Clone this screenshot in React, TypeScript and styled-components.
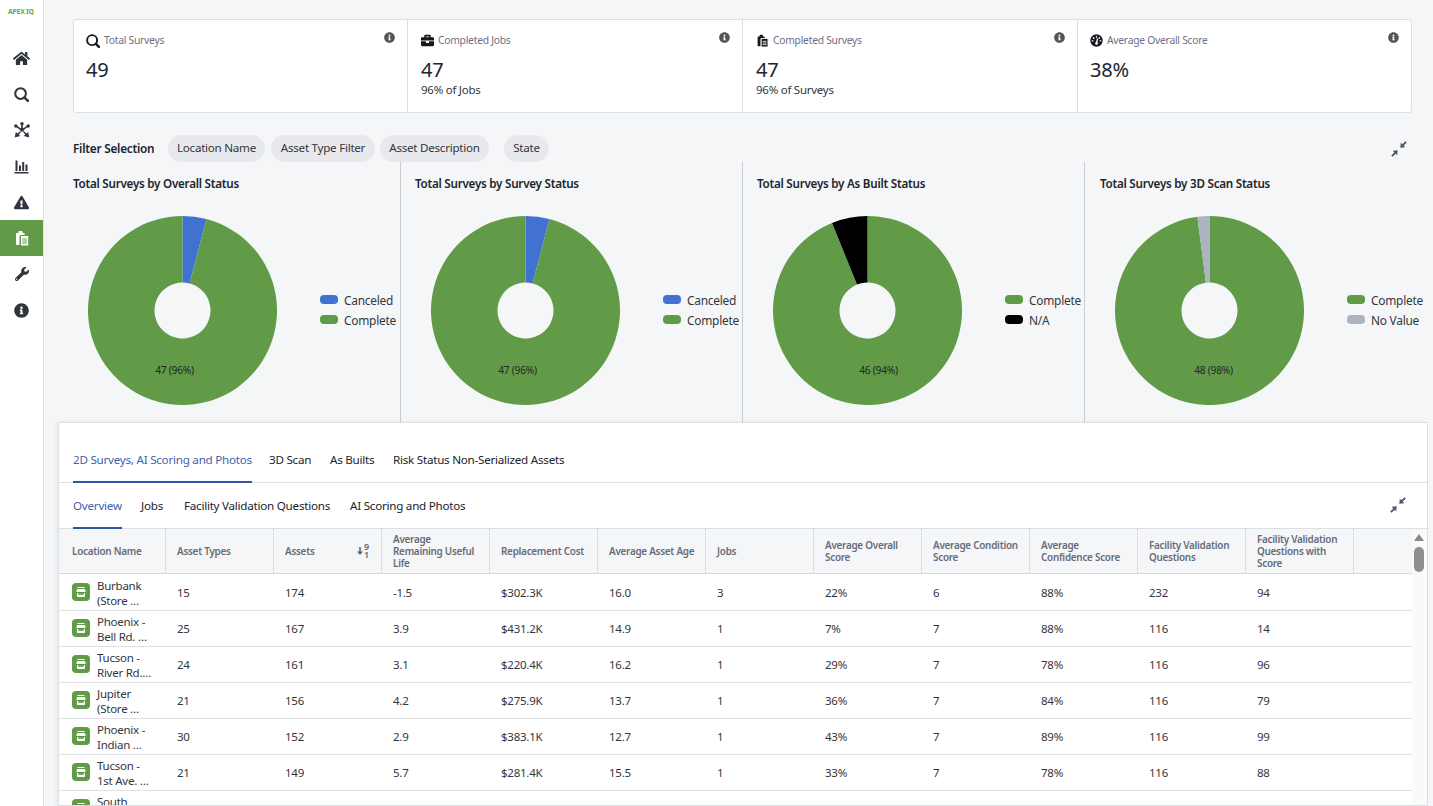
import React from "react";
import styled, { createGlobalStyle } from "styled-components";
import { FaHome, FaExclamationTriangle, FaWrench, FaInfoCircle, FaBriefcase } from "react-icons/fa";

const FONT = `"Noto Sans", "Liberation Sans", sans-serif`;
const GREEN = "#619b48";
const BLUE = "#4272d1";

const Global = createGlobalStyle`
  html, body { margin: 0; padding: 0; height: 100%; overflow: hidden; background: #f5f6f8; }
  body { font-family: ${FONT}; color: #20242c; letter-spacing: -0.25px; }
  #root { height: 806px; }
  * { box-sizing: border-box; }
`;

const Shell = styled.div`display: flex; height: 806px; overflow: hidden;`;
const Sidebar = styled.nav`
  width: 44px; flex: none; background: #fff; border-right: 1px solid #dfe1e5;
  display: flex; flex-direction: column;
`;
const Logo = styled.div`
  height: 40px; padding: 7px 0 0 8px; font-size: 7px; line-height: 10px; font-weight: 700;
  color: #6aa850; letter-spacing: -0.3px; white-space: nowrap;
`;
const NavItem = styled.div<{ $active?: boolean }>`
  height: 36px; display: flex; align-items: center; justify-content: center;
  color: ${(p) => (p.$active ? "#fff" : "#30343c")};
  background: ${(p) => (p.$active ? GREEN : "transparent")};
`;
const Main = styled.main`flex: 1; min-width: 0; padding: 19px 5px 0 14px; display: flex; flex-direction: column;`;

const Cards = styled.section`
  margin: 0 16px 0 15px; height: 94px; flex: none; display: grid; grid-template-columns: 334px 335px 335px 1fr;
  background: #fff; border: 1px solid #dcdfe3; border-radius: 3px;
`;
const Card = styled.div`
  position: relative; padding: 13px 12px 0 13px; border-right: 1px solid #dcdfe3;
  &:first-child { padding-left: 12px; }
  &:last-child { border-right: 0; padding-left: 12px; }
`;
const CardHead = styled.div`display: flex; align-items: center; gap: 4px; height: 15px; color: #16181d;`;
const CardLabel = styled.span`font-size: 10.3px; line-height: 15px; color: #6d7088;`;
const InfoBadge = styled.span`position: absolute; top: 12px; right: 12px; color: #555; display: flex;`;
const CardValue = styled.div`font-size: 20px; line-height: 26px; margin-top: 9px; color: #20242c;`;
const CardSub = styled.div`font-size: 11.5px; line-height: 16px; margin-top: -1px; color: #33363d;`;

const FilterBar = styled.div`
  margin: 22px 21px 0 15px; height: 27px; flex: none; display: flex; align-items: center;
`;
const FilterTitle = styled.span`font-size: 11.8px; line-height: 24px; height: 26px; font-weight: 600; width: 95px; color: #20242c;`;
const Chip = styled.span<{ $w: number; $after: number }>`
  width: ${(p) => p.$w}px; margin-right: ${(p) => p.$after}px; height: 27px; padding-bottom: 2px; border-radius: 14px;
  background: #e8e9ec; font-size: 11.6px; display: flex; align-items: center; justify-content: center;
  color: #33363d; white-space: nowrap;
`;
const Spacer = styled.span`flex: 1;`;

const Charts = styled.section`display: grid; grid-template-columns: 343px 342px 342px 1fr; height: 260px; flex: none;`;
const ChartCol = styled.div`
  border-right: 1px solid #c9ccd1; padding: 14px 0 0 14px;
  &:first-child { padding-left: 15px; }
  &:last-child { border-right: 0; padding-left: 15px; }
`;
const ChartTitle = styled.h3`margin: 0; font-size: 11.65px; line-height: 16px; font-weight: 600; color: #20242c; white-space: nowrap;`;
const ChartBody = styled.div`
  display: flex; align-items: center; margin: 24px 0 0 16px;
  ${ChartCol}:first-child &, ${ChartCol}:last-child & { margin-left: 15px; }
`;
const Legend = styled.ul`list-style: none; margin: 0 0 3px 42px; padding: 0; display: flex; flex-direction: column; gap: 4px;`;
const LegendItem = styled.li`display: flex; align-items: center; gap: 6px; font-size: 11.9px; line-height: 16px; color: #33363d; white-space: nowrap;`;
const Swatch = styled.i<{ $c: string }>`display: block; width: 18px; height: 9px; border-radius: 4px; background: ${(p) => p.$c};`;

const Panel = styled.section`
  flex: 1; min-height: 0; background: #fff; border: 1px solid #dcdfe3; overflow: hidden;
  box-shadow: -2px 0 5px rgba(0,0,0,.06);
`;
const TabRow = styled.div<{ $h: number; $gap: number }>`
  height: ${(p) => p.$h}px; border-bottom: 1px solid #dcdfe3; padding-left: 14px;
  display: flex; gap: ${(p) => p.$gap}px; position: relative;
`;
const Tab = styled.div<{ $active?: boolean; $w: number; $pt: number }>`
  width: ${(p) => p.$w}px; padding-top: ${(p) => p.$pt}px; font-size: 11.65px; line-height: 18px; white-space: nowrap;
  color: ${(p) => (p.$active ? "#3e62b0" : "#20242c")};
  border-bottom: 2px solid ${(p) => (p.$active ? "#2f55a4" : "transparent")};
  margin-bottom: -1px;
`;
const Corner = styled.span`position: absolute; right: 21px; top: 14px; display: flex;`;

const TableWrap = styled.div`display: flex; align-items: stretch; height: 280px;`;
const Table = styled.div`flex: 1; min-width: 0;`;
const GRID = "107px repeat(11, 108px) 1fr";
const HeaderRow = styled.div`
  display: grid; grid-template-columns: ${GRID}; height: 45px; background: #f5f6f8;
  border-bottom: 1px solid #d5d8dc;
`;
const HeadCell = styled.div<{ $first?: boolean }>`
  padding: 0 8px 0 ${(p) => (p.$first ? 13 : 11)}px; border-right: 1px dotted #c5c8cd;
  display: flex; align-items: center; justify-content: space-between;
  font-size: 9.9px; line-height: 12px; font-weight: 600; color: #666c79;
  &:last-child { border-right: 0; }
`;
const RowList = styled.div`padding-top: 1px;`;
const Row = styled.div`
  display: grid; grid-template-columns: ${GRID}; height: 36px; border-bottom: 1px solid #dfe1e5;
`;
const Cell = styled.div`
  padding: 0 0 0 11px; display: flex; align-items: center; font-size: 11.5px; color: #33363d; white-space: nowrap;
`;
const NameCell = styled.div`
  padding-left: 13px; display: flex; align-items: flex-start; gap: 7px; height: 35px; overflow: visible;
`;
const StoreBadge = styled.span`
  flex: none; width: 18px; height: 18px; margin-top: 8px; border-radius: 4px; background: ${GREEN};
  display: flex; align-items: center; justify-content: center;
`;
const NameText = styled.div`font-size: 11.5px; line-height: 15px; padding-top: 3px; color: #33363d; white-space: nowrap;`;
const Scrollbar = styled.div`width: 15px; flex: none; background: #fafafa; position: relative;`;
const ScrollArrow = styled.span`
  position: absolute; top: 5px; left: 2px; width: 0; height: 0;
  border-left: 5px solid transparent; border-right: 5px solid transparent; border-bottom: 7px solid #8a8a8a;
`;
const ScrollThumb = styled.span`position: absolute; top: 18px; left: 2px; width: 10px; height: 25px; border-radius: 5px; background: #8f8f8f;`;
const SortIcon = styled.span`display: flex; align-items: center; gap: 1px; color: #5f6673; margin-right: 4px;`;
const SortDigits = styled.span`display: flex; flex-direction: column; font-size: 9px; line-height: 8px; font-weight: 600;`;

const Compress = () => (
  <svg width="16" height="16" viewBox="0 0 16 16" fill="#4d566b">
    <path d="M15.800 1.500 14.500.2 11.400 3.300 9.800 1.700 9.300 6.700l5-.5-1.600-1.600zM.2 14.500l1.300 1.300 3.100-3.100 1.600 1.600.5-5-5 .5 1.600 1.600z" />
  </svg>
);
const Lens = ({ s }: { s: number }) => (
  <svg width={s} height={s} viewBox="0 0 16 16" fill="none" stroke="currentColor">
    <circle cx="7" cy="7" r="5.700" strokeWidth="2.200" />
    <path d="M11.300 11.300 14.800 14.800" strokeWidth="2.800" strokeLinecap="round" />
  </svg>
);
const Clipboard = ({ c = "currentColor", s = 16, line = "#fff" }: { c?: string; s?: number; line?: string }) => (
  <svg width={s} height={s} viewBox="0 0 16 16">
    <path fill={c} d="M4.500 3V1.700A.8.8 0 0 1 5.300 1h2.400a.8.8 0 0 1 .8.700V3h1.200a1 1 0 0 1 1 1v1H7A1.500 1.500 0 0 0 5.500 6.500V15H3a1 1 0 0 1-1-1V4a1 1 0 0 1 1-1z" />
    <path fill={c} d="M7 6h7.200v9.500H7z" />
    <path stroke={line} strokeWidth="1" d="M8.300 9h4.600M8.300 11h4.600M8.300 13h4.600" />
  </svg>
);
const Hub = () => (
  <svg width="16" height="16" viewBox="0 0 16 16" fill="currentColor">
    <circle cx="8" cy="7.600" r="2.100" />
    <circle cx="8" cy="1.800" r="1.700" />
    <circle cx="1.800" cy="4" r="1.700" />
    <circle cx="14.200" cy="4" r="1.700" />
    <path d="M7.200 2h1.600v4H7.200zM2.200 3.100l4.600 3.400-.9 1.200L1.300 4.300zM13.800 3.100 9.200 6.500l.9 1.200 4.600-3.400z" />
    <path d="M6.300 9.100 7 10l-2.300 2.500 1.500 1.500L.7 15.400l1.100-5.500L3.400 11.500zM9.700 9.100 9 10l2.300 2.500-1.500 1.500 5.500 1.400-1.100-5.500-1.600 1.600z" />
  </svg>
);
const Bars = () => (
  <svg width="15" height="15" viewBox="0 0 15 15" fill="currentColor">
    <path d="M.5 13h14v1.600H.5zM1.500 1.500h2v10.500h-2zM5 6.500h2v5.500H5zM8.200 3h2v9h-2zM11.500 5.500h2V12h-2z" />
  </svg>
);
const Gauge = () => (
  <svg width="13" height="13" viewBox="0 0 13 13">
    <circle cx="6.500" cy="6.500" r="6.200" fill="#16181d" />
    <path stroke="#fff" strokeWidth="1.300" strokeLinecap="round" d="M6.500 2.400v.6M3.400 3.700l.5.5M9.600 3.700l-.5.5M2.200 6.800h.7M10.800 6.800h-.7M6.500 9.500 7.400 5" />
    <circle cx="6.500" cy="9.400" r="1.300" fill="#fff" />
  </svg>
);
const Store = () => (
  <svg width="12" height="12" viewBox="0 0 12 12" fill="#fff">
    <path d="M2.500 1h7v1.100h-7zM2.200 3h7.600l1 2.200c0 .5-.4.8-.9.8H2.100c-.5 0-.9-.3-.9-.8z" />
    <path d="M2 7h1.200v1.800h5.600V7H10v3.200c0 .5-.3.8-.8.8H2.800c-.5 0-.8-.3-.8-.8z" />
  </svg>
);

type Slice = { value: number; color: string };
const polar = (a: number, r: number) => {
  const t = (a * Math.PI) / 180;
  return [94.5 + r * Math.sin(t), 94.5 - r * Math.cos(t)];
};
const arcPath = (start: number, end: number) => {
  const R = 94.5, I = 28;
  const [x1, y1] = polar(start, R), [x2, y2] = polar(end, R), [x3, y3] = polar(end, I), [x4, y4] = polar(start, I);
  const large = end - start > 180 ? 1 : 0;
  return `M${x1} ${y1}A${R} ${R} 0 ${large} 1 ${x2} ${y2}L${x3} ${y3}A${I} ${I} 0 ${large} 0 ${x4} ${y4}Z`;
};
const ChartSvg = styled.svg`flex: none; display: block;`;

const Donut = ({ first, second, label, lx }: { first: Slice; second: Slice; label: string; lx: number }) => {
  const total = first.value + second.value;
  const a = (first.value / total) * 360;
  return (
    <ChartSvg width="190" height="190" viewBox="0 0 190 190">
      <path d={arcPath(0, a)} fill={first.color} />
      <path d={arcPath(a, 360)} fill={second.color} />
      <text x={lx} y="158" textAnchor="middle" fontSize="10.200" fill="#20242c" fontFamily={FONT}>{label}</text>
    </ChartSvg>
  );
};

const charts = [
  { title: "Total Surveys by Overall Status", first: { value: 2, color: BLUE }, second: { value: 47, color: GREEN }, label: "47 (96%)", lx: 86.5, legend: [["Canceled", BLUE], ["Complete", GREEN]] },
  { title: "Total Surveys by Survey Status", first: { value: 2, color: BLUE }, second: { value: 47, color: GREEN }, label: "47 (96%)", lx: 86.5, legend: [["Canceled", BLUE], ["Complete", GREEN]] },
  { title: "Total Surveys by As Built Status", first: { value: 46, color: GREEN }, second: { value: 3, color: "#000" }, label: "46 (94%)", lx: 105.5, legend: [["Complete", GREEN], ["N/A", "#000"]] },
  { title: "Total Surveys by 3D Scan Status", first: { value: 48, color: GREEN }, second: { value: 1, color: "#aeb3c0" }, label: "48 (98%)", lx: 98.5, legend: [["Complete", GREEN], ["No Value", "#aeb3c0"]] },
];

const headers = ["Location Name", "Asset Types", "Assets", "Average Remaining Useful Life", "Replacement Cost", "Average Asset Age", "Jobs", "Average Overall Score", "Average Condition Score", "Average Confidence Score", "Facility Validation Questions", "Facility Validation Questions with Score", ""];
const rows: [string, string, string[]][] = [
  ["Burbank", "(Store …", ["15", "174", "-1.5", "$302.3K", "16.0", "3", "22%", "6", "88%", "232", "94"]],
  ["Phoenix -", "Bell Rd. …", ["25", "167", "3.9", "$431.2K", "14.9", "1", "7%", "7", "88%", "116", "14"]],
  ["Tucson -", "River Rd.…", ["24", "161", "3.1", "$220.4K", "16.2", "1", "29%", "7", "78%", "116", "96"]],
  ["Jupiter", "(Store …", ["21", "156", "4.2", "$275.9K", "13.7", "1", "36%", "7", "84%", "116", "79"]],
  ["Phoenix -", "Indian …", ["30", "152", "2.9", "$383.1K", "12.7", "1", "43%", "7", "89%", "116", "99"]],
  ["Tucson -", "1st Ave. …", ["21", "149", "5.7", "$281.4K", "15.5", "1", "33%", "7", "78%", "116", "88"]],
  ["South", "Gate …", ["25", "148", "4.1", "$302.0K", "18.8", "1", "18%", "7", "85%", "116", "88"]],
];
const cards = [
  { icon: <Lens s={14} />, label: "Total Surveys", value: "49" },
  { icon: <FaBriefcase size={13} />, label: "Completed Jobs", value: "47", sub: "96% of Jobs" },
  { icon: <Clipboard s={13} c="#16181d" />, label: "Completed Surveys", value: "47", sub: "96% of Surveys" },
  { icon: <Gauge />, label: "Average Overall Score", value: "38%" },
];
const chips: [string, number, number][] = [["Location Name", 97, 6], ["Asset Type Filter", 104, 5], ["Asset Description", 109, 15], ["State", 45, 0]];

export default function App() {
  return (
    <>
      <Global />
      <Shell>
        <Sidebar>
          <Logo>APEX IQ</Logo>
          <NavItem><FaHome size={17} /></NavItem>
          <NavItem><Lens s={15} /></NavItem>
          <NavItem><Hub /></NavItem>
          <NavItem><Bars /></NavItem>
          <NavItem><FaExclamationTriangle size={15} /></NavItem>
          <NavItem $active><Clipboard c="#fff" line={GREEN} /></NavItem>
          <NavItem><FaWrench size={14} /></NavItem>
          <NavItem><FaInfoCircle size={15} /></NavItem>
        </Sidebar>
        <Main>
          <Cards>
            {cards.map((c) => (
              <Card key={c.label}>
                <CardHead>{c.icon}<CardLabel>{c.label}</CardLabel></CardHead>
                <InfoBadge><FaInfoCircle size={11} /></InfoBadge>
                <CardValue>{c.value}</CardValue>
                {c.sub && <CardSub>{c.sub}</CardSub>}
              </Card>
            ))}
          </Cards>
          <FilterBar>
            <FilterTitle>Filter Selection</FilterTitle>
            {chips.map(([t, w, a]) => <Chip key={t} $w={w} $after={a}>{t}</Chip>)}
            <Spacer />
            <Compress />
          </FilterBar>
          <Charts>
            {charts.map((c) => (
              <ChartCol key={c.title}>
                <ChartTitle>{c.title}</ChartTitle>
                <ChartBody>
                  <Donut first={c.first} second={c.second} label={c.label} lx={c.lx} />
                  <Legend>
                    {c.legend.map(([t, col]) => <LegendItem key={t}><Swatch $c={col} />{t}</LegendItem>)}
                  </Legend>
                </ChartBody>
              </ChartCol>
            ))}
          </Charts>
          <Panel>
            <TabRow $h={60} $gap={17}>
              <Tab $active $w={179} $pt={28}>2D Surveys, AI Scoring and Photos</Tab>
              <Tab $w={44} $pt={28}>3D Scan</Tab>
              <Tab $w={46} $pt={28}>As Builts</Tab>
              <Tab $w={175} $pt={28}>Risk Status Non-Serialized Assets</Tab>
            </TabRow>
            <TabRow $h={46} $gap={19}>
              <Tab $active $w={49} $pt={14}>Overview</Tab>
              <Tab $w={24} $pt={14}>Jobs</Tab>
              <Tab $w={147} $pt={14}>Facility Validation Questions</Tab>
              <Tab $w={115} $pt={14}>AI Scoring and Photos</Tab>
              <Corner><Compress /></Corner>
            </TabRow>
            <TableWrap>
              <Table>
                <HeaderRow>
                  {headers.map((h, i) => (
                    <HeadCell key={i} $first={i === 0}>
                      <span>{h}</span>
                      {h === "Assets" && (
                        <SortIcon>
                          <svg width="6" height="8" viewBox="0 0 6 8" fill="currentColor"><path d="M2.200 0h1.600v4.500H6L3 8 0 4.500h2.200z" /></svg>
                          <SortDigits><span>9</span><span>1</span></SortDigits>
                        </SortIcon>
                      )}
                    </HeadCell>
                  ))}
                </HeaderRow>
                <RowList>
                  {rows.map(([a, b, vals]) => (
                    <Row key={a + b}>
                      <NameCell>
                        <StoreBadge><Store /></StoreBadge>
                        <NameText>{a}<br />{b}</NameText>
                      </NameCell>
                      {vals.map((v, i) => <Cell key={i}>{v}</Cell>)}
                    </Row>
                  ))}
                </RowList>
              </Table>
              <Scrollbar><ScrollArrow /><ScrollThumb /></Scrollbar>
            </TableWrap>
          </Panel>
        </Main>
      </Shell>
    </>
  );
}
